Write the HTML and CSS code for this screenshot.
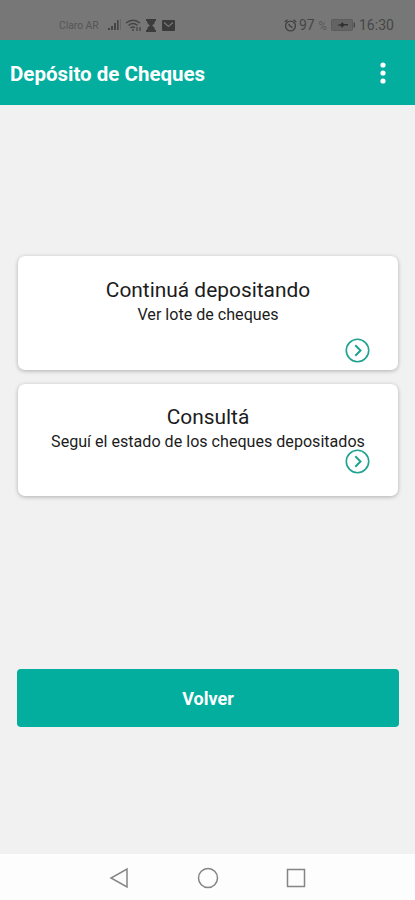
FILE: index.html
```html
<!DOCTYPE html>
<html lang="es">
<head>
  <meta charset="UTF-8" />
  <meta name="viewport" content="width=device-width, initial-scale=1.0" />
  <title>Depósito de Cheques</title>
  <link rel="stylesheet" href="styles.css">
</head>
<body>
  <div class="status-bar">
    <div class="status-left">
      <span class="carrier">Claro AR</span>
      <svg class="signal" width="14" height="12" viewBox="0 0 14 12">
        <path d="M1 9h2v2H1zM4 7h2v4H4zM7 4h2v7H7zM10 1h1.6v10H10z" fill="#444"/>
        <path d="M13 0h1v11h-1z" fill="#666"/>
      </svg>
      <svg class="wifi" width="17" height="13" viewBox="0 0 17 13" fill="none" stroke="#444" stroke-width="1.5">
        <path d="M1 4Q8 -1.5 15 4M3.5 6.5Q8 2.5 12.500 6.500M5.500 9Q8 7 10 8.800"/>
        <path d="M7 11h2M12 8v4M15 8v4" stroke-width="1.300"/>
      </svg>
      <svg class="hourglass" width="10" height="13" viewBox="0 0 10 13">
        <path d="M0 0h10v2H9C9 4.500 7.500 5.500 6 6.500C7.500 7.500 9 8.500 9 11h1v2H0v-2h1C1 8.500 2.500 7.500 4 6.500C2.500 5.500 1 4.500 1 2H0z" fill="#3c3c3c"/>
      </svg>
      <svg class="mail" width="13" height="11" viewBox="0 0 13 11">
        <rect width="13" height="11" rx="1" fill="#3a3a3a"/>
        <path d="M2 2.500l4.500 4L11 2.500" fill="none" stroke="#777" stroke-width="1.200"/>
      </svg>
    </div>
    <div class="status-right">
      <svg width="13" height="13" viewBox="0 0 13 13" fill="none" stroke="#424242" stroke-width="1.400">
        <circle cx="6.500" cy="7" r="4.900"/>
        <path d="M.7 3L3.500.7M9.500.7L12.300 3M4.500 5l2 2.500 2 1"/>
      </svg>
      <span class="percent">97 <small>%</small></span>
      <svg class="battery" width="25" height="12" viewBox="0 0 25 12">
        <rect x=".5" y=".5" width="21" height="11" rx="1" fill="#646464" stroke="#5c5c5c"/>
        <path d="M22.500 3.500H24v5h-1.500z" fill="#484848"/>
        <path d="M6 6l4-1 1-2 2 2h4v1.500h-4L11 9l-1-2z" fill="#303030"/>
      </svg>
      <span class="clock">16:30</span>
    </div>
  </div>

  <header class="toolbar">
    <h1>Depósito de Cheques</h1>
    <button class="menu" aria-label="Más opciones">
      <svg width="6" height="22" viewBox="0 0 6 22" fill="#fff">
        <circle cx="3" cy="3" r="2.600"/>
        <circle cx="3" cy="11" r="2.600"/>
        <circle cx="3" cy="19" r="2.600"/>
      </svg>
    </button>
  </header>

  <main>
    <section class="card">
      <h2>Continuá depositando</h2>
      <p>Ver lote de cheques</p>
      <svg class="arrow" width="25" height="25" viewBox="0 0 25 25">
        <circle cx="12.500" cy="12.500" r="11.200"/>
        <path class="chevron" d="M10.300 7.300l5.200 5.200-5.200 5.200"/>
      </svg>
    </section>

    <section class="card card-consulta">
      <h2>Consultá</h2>
      <p>Seguí el estado de los cheques depositados</p>
      <svg class="arrow" width="25" height="25" viewBox="0 0 25 25">
        <circle cx="12.500" cy="12.500" r="11.200"/>
        <path class="chevron" d="M10.300 7.300l5.200 5.200-5.200 5.200"/>
      </svg>
    </section>

    <button class="btn-volver">Volver</button>
  </main>

  <nav class="nav-bar">
    <svg width="20" height="22" viewBox="0 0 20 22"><path d="M18 2v18L2 11z"/></svg>
    <svg width="22" height="22" viewBox="0 0 22 22"><circle cx="11" cy="11" r="9.500"/></svg>
    <svg width="20" height="22" viewBox="0 0 20 22"><rect x="1.500" y="2.500" width="17" height="17"/></svg>
  </nav>
</body>
</html>
```
FILE: styles.css
```css
* {
  box-sizing: border-box;
}

body {
  margin: 0;
  height: 900px;
  display: flex;
  flex-direction: column;
  font-family: Roboto, sans-serif;
  background: #f1f1f1;
  color: #1c1c1c;
}

h1, h2, p {
  margin: 0;
}

button {
  border: none;
  padding: 0;
  font-family: inherit;
  cursor: pointer;
}

svg {
  display: block;
  flex-shrink: 0;
}

.status-bar {
  height: 40px;
  padding: 10px 22px 0 59px;
  display: flex;
  justify-content: space-between;
  background: #777;
  color: #464646;
}

.status-left,
.status-right {
  display: flex;
  align-items: center;
  height: 30px;
}

.carrier {
  width: 41px;
  margin-right: 7px;
  font-size: 10.3px;
  white-space: nowrap;
  color: #555;
}

.wifi {
  margin-left: 4px;
}

.hourglass {
  margin-left: 4px;
}

.mail {
  margin-left: 6px;
}

.status-right {
  font-size: 14px;
}

.percent {
  width: 32px;
  margin-left: 2px;
  white-space: nowrap;
}

.percent small {
  font-size: 12px;
  color: #5a5a5a;
}

.battery {
  margin-right: 3px;
}

.clock {
  width: 34px;
  white-space: nowrap;
}

.toolbar {
  height: 65px;
  padding: 1px 29px 0 10px;
  display: flex;
  align-items: center;
  justify-content: space-between;
  background: #03ae9f;
  color: #fff;
}

.toolbar h1 {
  padding-top: 1px;
  font-size: 20.5px;
  font-weight: 700;
}

.menu {
  background: none;
}

main {
  flex: 1;
  padding: 151px 17px 0 18px;
}

.card {
  height: 114px;
  padding-top: 22px;
  margin-bottom: 14px;
  background: #fff;
  border-radius: 7px;
  box-shadow: 0 1px 4px rgba(0, 0, 0, 0.28);
  text-align: center;
}

.card h2 {
  font-size: 20.9px;
  line-height: 25px;
  font-weight: 400;
}

.card p {
  font-size: 16.1px;
  line-height: 24px;
}

.arrow {
  margin: 11px 28px 0 auto;
  fill: none;
  stroke: #1fa390;
  stroke-width: 1.6;
}

.chevron {
  stroke-width: 2;
}

.card-consulta {
  height: 112px;
  padding-top: 21px;
}

.card-consulta .arrow {
  margin-top: -5px;
}

.btn-volver {
  display: block;
  width: 382px;
  height: 58px;
  margin: 173px 0 0 -1px;
  border-radius: 4px;
  background: #03ae9f;
  color: #fff;
  font-size: 18px;
  font-weight: 700;
}

.nav-bar {
  height: 46px;
  padding: 1px 109px 0;
  display: flex;
  align-items: center;
  justify-content: space-between;
  background: #fdfdfd;
}

.nav-bar svg {
  fill: none;
  stroke: #858585;
  stroke-width: 1.5;
}
```
